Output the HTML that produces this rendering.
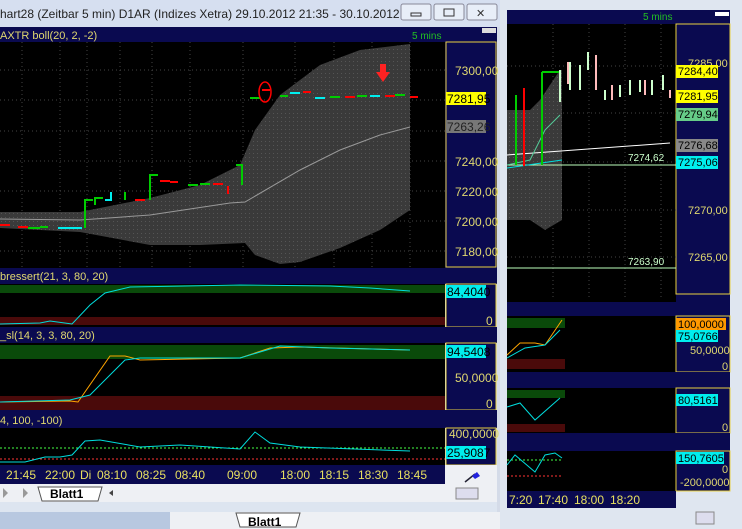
<!DOCTYPE html>
<html><head><style>
body{margin:0;width:742px;height:529px;overflow:hidden;background:#d4dbe8;font-family:"Liberation Sans",sans-serif}
svg{position:absolute;left:0;top:0}
text{font-family:"Liberation Sans",sans-serif}
</style></head><body>
<svg width="742" height="529" viewBox="0 0 742 529">
<defs>
<pattern id="dg" width="4" height="4" patternUnits="userSpaceOnUse"><rect width="4" height="4" fill="#3a3a3a"/><rect x="1" y="1" width="1" height="1" fill="#555"/></pattern>
</defs>
<!-- right window -->
<rect x="500" y="0" width="242" height="529" fill="#dfe6f0"/>
<rect x="507" y="10" width="223" height="14" fill="#0a0a50"/>
<text x="643" y="20" font-size="10" fill="#22c022">5 mins</text>
<rect x="715" y="12" width="14" height="4" fill="#fff"/>
<rect x="507" y="24" width="169" height="278" fill="#000"/>
<rect x="676" y="24" width="54" height="278" fill="#0a0a50"/>
<rect x="676" y="24" width="54" height="270" fill="none" stroke="#e8d040" stroke-width="1"/>
<g stroke="#444" stroke-dasharray="1,3">
<line x1="553" y1="24" x2="553" y2="300"/><line x1="589" y1="24" x2="589" y2="300"/><line x1="625" y1="24" x2="625" y2="300"/><line x1="661" y1="24" x2="661" y2="300"/>
<line x1="507" y1="66" x2="676" y2="66"/><line x1="507" y1="113" x2="676" y2="113"/><line x1="507" y1="162" x2="676" y2="162"/><line x1="507" y1="210" x2="676" y2="210"/><line x1="507" y1="257" x2="676" y2="257"/>
</g>
<polygon points="507,110 530,110 540,100 560,70 562,70 562,220 545,230 530,220 507,220" fill="url(#dg)"/>
<line x1="507" y1="155" x2="670" y2="143" stroke="#fff"/>
<line x1="507" y1="165" x2="676" y2="165" stroke="#bfb"/>
<line x1="507" y1="268" x2="676" y2="268" stroke="#bfb"/>
<line x1="507" y1="168" x2="562" y2="160" stroke="#0dd"/>
<polyline points="507,165 530,160 545,130 560,115" stroke="#5c9" fill="none"/>
<line x1="516" y1="95" x2="516" y2="165" stroke="#0c0" stroke-width="2"/>
<line x1="524" y1="88" x2="524" y2="166" stroke="#f00" stroke-width="2"/>
<line x1="542" y1="72" x2="542" y2="165" stroke="#0c0" stroke-width="2"/>
<line x1="542" y1="72" x2="560" y2="72" stroke="#0c0" stroke-width="2"/>
<g stroke="#cfc" stroke-width="2" fill="none"><path d="M560 70v32M570 62v28M580 65v25M588 52v18M605 90v10M620 85v12M630 80v15M640 80v12M652 80v15M663 75v15"/></g>
<g stroke="#fbb" stroke-width="2" fill="none"><path d="M568 62v22M596 55v35M612 85v15M645 80v15M670 90v8"/></g>
<text x="628" y="161" font-size="10" fill="#cfc">7274,62</text>
<text x="628" y="265" font-size="10" fill="#cfc">7263,90</text>
<g font-size="11" fill="#e0d870">
<text x="688" y="67">7285,00</text><text x="688" y="214">7270,00</text><text x="688" y="261">7265,00</text></g>
<rect x="676" y="65" width="42" height="13" fill="#ff0"/><text x="678" y="75" font-size="11">7284,40</text>
<rect x="676" y="90" width="42" height="13" fill="#ff0"/><text x="678" y="100" font-size="11">7281,95</text>
<rect x="676" y="108" width="42" height="13" fill="#6c8"/><text x="678" y="118" font-size="11">7279,94</text>
<rect x="676" y="139" width="42" height="13" fill="#888"/><text x="678" y="149" font-size="11">7276,68</text>
<rect x="676" y="156" width="42" height="13" fill="#0ee"/><text x="678" y="166" font-size="11">7275,06</text>
<rect x="507" y="302" width="223" height="14" fill="#0a0a50"/>
<rect x="507" y="316" width="169" height="56" fill="#000"/>
<rect x="507" y="318" width="58" height="10" fill="#0a4a0a"/><rect x="507" y="359" width="58" height="10" fill="#4a0a0a"/>
<polyline points="507,355 520,343 535,343 545,345 562,320" stroke="orange" fill="none"/>
<polyline points="507,358 525,348 545,345 560,330" stroke="#0dd" fill="none"/>
<rect x="676" y="316" width="54" height="56" fill="#0a0a50" stroke="#e8d040"/>
<rect x="676" y="318" width="50" height="12" fill="#f90"/><text x="678" y="328" font-size="11">100,0000</text>
<rect x="676" y="330" width="42" height="12" fill="#0ee"/><text x="678" y="340" font-size="11">75,0766</text>
<text x="690" y="354" font-size="11" fill="#e0d870">50,0000</text><text x="722" y="370" font-size="11" fill="#e0d870">0</text>
<rect x="507" y="372" width="223" height="16" fill="#0a0a50"/>
<rect x="507" y="388" width="169" height="45" fill="#000"/>
<rect x="507" y="390" width="58" height="8" fill="#0a4a0a"/><rect x="507" y="424" width="58" height="8" fill="#4a0a0a"/>
<polyline points="507,407 520,403 535,420 560,398" stroke="#0dd" fill="none"/>
<rect x="676" y="388" width="54" height="45" fill="#0a0a50" stroke="#e8d040"/>
<rect x="676" y="394" width="42" height="12" fill="#0ee"/><text x="678" y="404" font-size="11">80,5161</text>
<text x="722" y="431" font-size="11" fill="#e0d870">0</text>
<rect x="507" y="433" width="223" height="18" fill="#0a0a50"/>
<rect x="507" y="451" width="169" height="40" fill="#000"/>
<line x1="507" y1="460" x2="562" y2="460" stroke="#4f4" stroke-dasharray="2,2"/>
<line x1="507" y1="476" x2="562" y2="476" stroke="#f33" stroke-dasharray="2,2"/>
<polyline points="507,465 515,455 535,472 545,455 555,453 562,458" stroke="#0dd" fill="none"/>
<rect x="676" y="451" width="54" height="40" fill="#0a0a50" stroke="#e8d040"/>
<rect x="676" y="452" width="48" height="12" fill="#0ee"/><text x="678" y="462" font-size="11">150,7605</text>
<text x="722" y="473" font-size="11" fill="#e0d870">0</text><text x="680" y="486" font-size="11" fill="#e0d870">-200,0000</text>
<rect x="507" y="491" width="169" height="17" fill="#0a0a50"/>
<g font-size="12" fill="#e8e060"><text x="509" y="504">7:20</text><text x="538" y="504">17:40</text><text x="574" y="504">18:00</text><text x="610" y="504">18:20</text></g>
<!-- left window -->
<rect x="0" y="0" width="500" height="27" fill="#d6dff0"/>
<text x="0" y="18" font-size="12" fill="#222">hart28 (Zeitbar 5 min)  D1AR (Indizes Xetra) 29.10.2012 21:35 - 30.10.2012 1...</text>
<g fill="#e8eef8" stroke="#889"><rect x="401" y="4" width="30" height="16" rx="2"/><rect x="434" y="4" width="30" height="16" rx="2"/><rect x="467" y="4" width="30" height="16" rx="2"/></g>
<rect x="411" y="13" width="10" height="3" fill="none" stroke="#333"/><rect x="444" y="9" width="10" height="7" fill="none" stroke="#333"/>
<text x="476" y="17" font-size="11" fill="#333">✕</text>
<rect x="0" y="27" width="497" height="15" fill="#0a0a50"/>
<text x="0" y="39" font-size="11" fill="#e0d870">AXTR boll(20, 2, -2)</text>
<text x="412" y="39" font-size="10" fill="#22c022">5 mins</text>
<rect x="482" y="28" width="14" height="5" fill="#ddd"/>
<rect x="0" y="42" width="445" height="226" fill="#000"/>
<g stroke="#444" stroke-dasharray="1,3">
<line x1="22" y1="42" x2="22" y2="268"/><line x1="60" y1="42" x2="60" y2="268"/><line x1="87" y1="42" x2="87" y2="268"/><line x1="120" y1="42" x2="120" y2="268"/><line x1="152" y1="42" x2="152" y2="268"/><line x1="190" y1="42" x2="190" y2="268"/><line x1="243" y1="42" x2="243" y2="268"/><line x1="295" y1="42" x2="295" y2="268"/><line x1="334" y1="42" x2="334" y2="268"/><line x1="372" y1="42" x2="372" y2="268"/><line x1="410" y1="42" x2="410" y2="268"/>
<line x1="0" y1="70" x2="445" y2="70"/><line x1="0" y1="100" x2="445" y2="100"/><line x1="0" y1="131" x2="445" y2="131"/><line x1="0" y1="161" x2="445" y2="161"/><line x1="0" y1="191" x2="445" y2="191"/><line x1="0" y1="221" x2="445" y2="221"/><line x1="0" y1="251" x2="445" y2="251"/>
</g>
<polygon points="0,212 80,212 150,198 200,185 240,165 255,130 280,95 320,65 360,50 410,44 410,210 380,230 340,248 300,262 280,264 255,255 245,243 200,245 150,245 80,232 0,228" fill="url(#dg)"/>
<polyline points="0,219 80,220 150,215 230,203 245,202 300,170 340,150 380,135 410,127" stroke="#999" fill="none"/>
<g stroke-width="2" fill="none">
<path d="M0 225h10M28 228h12M85 228v-28h10M95 205v-8h8M150 200v-25h8M242 185v-22M200 185h10"/>
</g>
<g stroke-width="2" fill="none" stroke="#0c0">
<path d="M28 228h12M40 227h8M85 228v-28h8M95 205v-7h8M125 200v-8M150 200v-25h8M188 185h10M200 184h10M242 185v-20h-6M250 98h10M280 96h8M330 97h10M357 96h10M395 95h10"/>
</g>
<g stroke-width="2" fill="none" stroke="#f00">
<path d="M0 225h10M18 227h10M135 200h10M160 181h10M170 182h8M213 184h10M228 186v8M262 90h8M303 92h8M345 97h10M385 96h10M410 97h8"/>
</g>
<g stroke-width="2" fill="none" stroke="#0ee">
<path d="M58 228h12M70 228h12M111 192v8h-6M290 93h10M315 98h10M370 96h10"/>
</g>
<ellipse cx="265" cy="92" rx="6" ry="10" stroke="#f00" fill="none" stroke-width="1.5"/>
<path d="M380 64h6v8h4l-7 10l-7-10h4z" fill="#f22"/>
<rect x="445" y="42" width="52" height="226" fill="#0a0a50"/>
<rect x="446" y="42" width="50" height="225" fill="none" stroke="#e8d040"/>
<g font-size="12" fill="#e0d870"><text x="455" y="75">7300,00</text><text x="455" y="166">7240,00</text><text x="455" y="196">7220,00</text><text x="455" y="226">7200,00</text><text x="455" y="256">7180,00</text></g>
<rect x="446" y="92" width="40" height="13" fill="#ff0"/><text x="447" y="103" font-size="12">7281,95</text>
<rect x="446" y="120" width="40" height="13" fill="#777"/><text x="447" y="131" font-size="12" fill="#222">7263,26</text>
<rect x="0" y="268" width="497" height="16" fill="#0a0a50"/>
<text x="0" y="280" font-size="11" fill="#e0d870">bressert(21, 3, 80, 20)</text>
<rect x="0" y="284" width="445" height="43" fill="#000"/>
<rect x="0" y="285" width="445" height="8" fill="#0a4a0a"/><rect x="0" y="317" width="445" height="8" fill="#4a0a0a"/>
<polyline points="0,324 40,323 50,321 72,324 90,305 105,293 130,287 240,285 330,286 370,288 410,291" stroke="#0dd" fill="none"/>
<rect x="446" y="284" width="50" height="43" fill="#0a0a50" stroke="#e8d040"/>
<rect x="446" y="285" width="40" height="13" fill="#0ee"/><text x="447" y="296" font-size="12">84,4040</text>
<text x="486" y="325" font-size="12" fill="#e0d870">0</text>
<rect x="0" y="327" width="497" height="16" fill="#0a0a50"/>
<text x="0" y="339" font-size="11" fill="#e0d870">_sl(14, 3, 3, 80, 20)</text>
<rect x="0" y="343" width="445" height="67" fill="#000"/>
<rect x="0" y="345" width="445" height="14" fill="#0a4a0a"/><rect x="0" y="396" width="445" height="14" fill="#4a0a0a"/>
<polyline points="0,402 70,401 78,402 110,356 125,356 140,360 240,358 270,348 300,347 410,350" stroke="orange" fill="none"/>
<polyline points="0,402 70,400 90,395 125,360 140,358 240,358 280,346 330,348 410,350" stroke="#0dd" fill="none"/>
<rect x="446" y="343" width="50" height="67" fill="#0a0a50" stroke="#e8d040"/>
<rect x="446" y="345" width="40" height="13" fill="#0ee"/><text x="447" y="356" font-size="12">94,5408</text>
<text x="455" y="382" font-size="12" fill="#e0d870">50,0000</text><text x="486" y="408" font-size="12" fill="#e0d870">0</text>
<rect x="0" y="410" width="497" height="18" fill="#0a0a50"/>
<text x="0" y="424" font-size="11" fill="#e0d870">4, 100, -100)</text>
<rect x="0" y="428" width="445" height="37" fill="#000"/>
<line x1="0" y1="448" x2="445" y2="448" stroke="#4f4" stroke-dasharray="2,2"/>
<line x1="0" y1="459" x2="445" y2="459" stroke="#f33" stroke-dasharray="2,2"/>
<polyline points="0,462 25,462 45,457 60,457 72,455 85,441 100,440 140,447 180,445 240,449 255,432 270,443 300,447 410,451" stroke="#0dd" fill="none"/>
<rect x="446" y="428" width="50" height="37" fill="#0a0a50" stroke="#e8d040"/>
<text x="449" y="438" font-size="12" fill="#e0d870">400,0000</text>
<rect x="446" y="446" width="40" height="13" fill="#0ee"/><text x="447" y="457" font-size="12">25,9087</text>
<rect x="0" y="465" width="445" height="19" fill="#0a0a50"/>
<g font-size="12" fill="#e8e060"><text x="6" y="479">21:45</text><text x="45" y="479">22:00</text><text x="80" y="479">Di</text><text x="97" y="479">08:10</text><text x="136" y="479">08:25</text><text x="175" y="479">08:40</text><text x="227" y="479">09:00</text><text x="280" y="479">18:00</text><text x="319" y="479">18:15</text><text x="358" y="479">18:30</text><text x="397" y="479">18:45</text></g>
<rect x="445" y="465" width="52" height="19" fill="#eef0f4"/>
<path d="M465 482l10-8" stroke="#223" stroke-width="1.5"/><path d="M472 476l5-4 3 4-5 3z" fill="#22d"/>
<rect x="0" y="484" width="497" height="18" fill="#eef0f4"/>
<g fill="#999"><path d="M3 488l5 5-5 5z"/><path d="M23 488l5 5-5 5zM30 488v10"/></g>
<path d="M38 487l4 14h56l4-14z" fill="#fff" stroke="#555"/>
<text x="50" y="498" font-size="12" font-weight="bold">Blatt1</text>
<path d="M113 490l-4 3 4 3z" fill="#444"/>
<rect x="456" y="488" width="22" height="11" fill="#dde" stroke="#888"/>
<rect x="0" y="502" width="497" height="10" fill="#dde5f0"/>
<rect x="0" y="512" width="170" height="17" fill="#b8c8e0"/>
<rect x="170" y="512" width="330" height="17" fill="#eef0f4"/>
<path d="M236 513l4 14h56l4-14z" fill="#fff" stroke="#555"/>
<text x="248" y="526" font-size="12" font-weight="bold">Blatt1</text>
<rect x="696" y="512" width="18" height="12" fill="#dde" stroke="#888"/>
</svg>
</body></html>
